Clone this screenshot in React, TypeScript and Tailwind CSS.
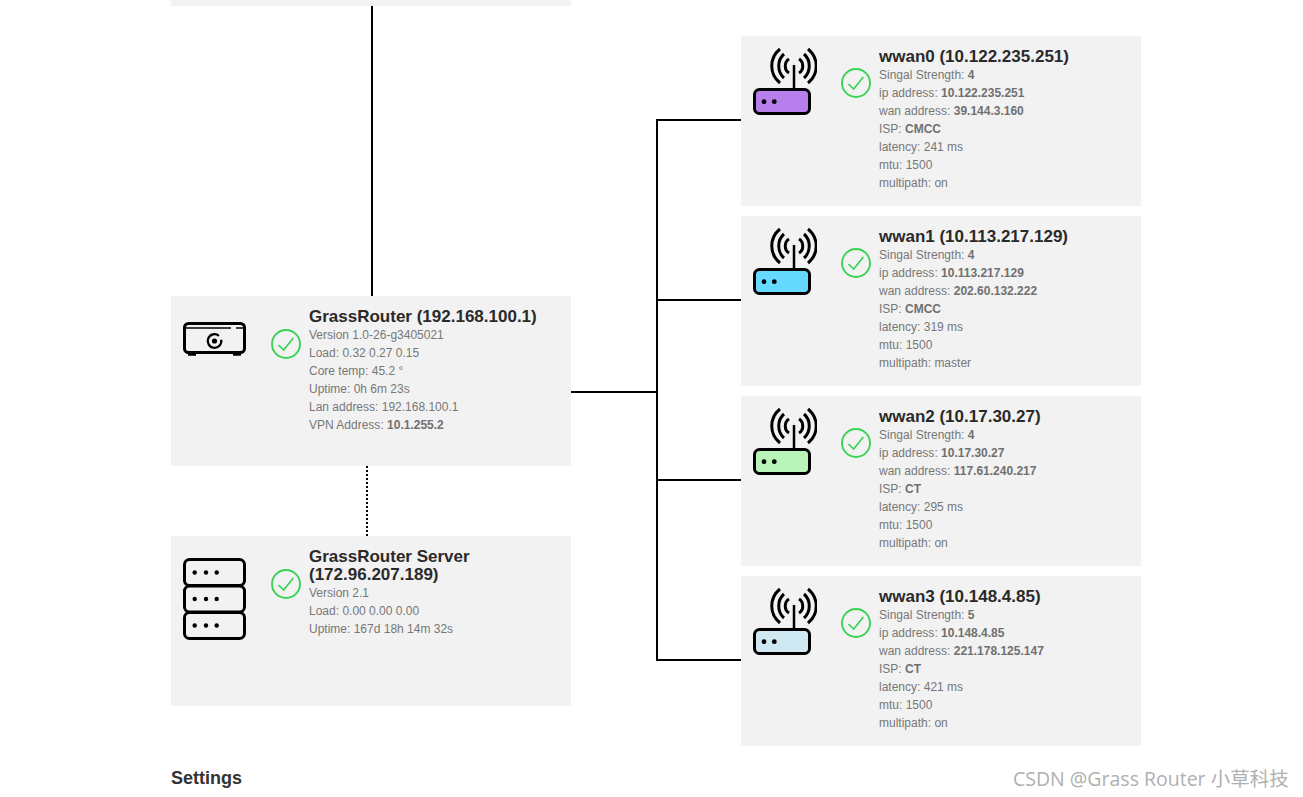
const font = "font-['Liberation_Sans',Arial,sans-serif]";

const wans = [
  {
    name: "wwan0 (10.122.235.251)",
    color: "#b77fec",
    strength: "4",
    ip: "10.122.235.251",
    wan: "39.144.3.160",
    isp: "CMCC",
    latency: "241 ms",
    multipath: "on",
  },
  {
    name: "wwan1 (10.113.217.129)",
    color: "#66d9ff",
    strength: "4",
    ip: "10.113.217.129",
    wan: "202.60.132.222",
    isp: "CMCC",
    latency: "319 ms",
    multipath: "master",
  },
  {
    name: "wwan2 (10.17.30.27)",
    color: "#b8f4b8",
    strength: "4",
    ip: "10.17.30.27",
    wan: "117.61.240.217",
    isp: "CT",
    latency: "295 ms",
    multipath: "on",
  },
  {
    name: "wwan3 (10.148.4.85)",
    color: "#cfe8f1",
    strength: "5",
    ip: "10.148.4.85",
    wan: "221.178.125.147",
    isp: "CT",
    latency: "421 ms",
    multipath: "on",
  },
];

const CheckIcon = ({ top }: { top: string }) => (
  <svg viewBox="0 0 30 30" className={`w-[30px] h-[30px] shrink-0 ml-6 ${top}`} fill="none" stroke="#3ad356">
    <circle cx="15" cy="15" r="14" strokeWidth="1.9" />
    <path d="M7.4 16 L12.7 21 L22.3 9" strokeWidth="1.7" />
  </svg>
);

const RouterIcon = ({ color }: { color: string }) => (
  <svg viewBox="0 0 64 74" className="w-16 h-[74px] shrink-0 mt-2" fill="none" stroke="#000">
    <path d="M27 5 C16 14 16 30 27 39 M31 10 C24 16 24 28 31 34 M36 15 C31 18 31 26 36 29" strokeWidth="3" />
    <path d="M55 5 C66 14 66 30 55 39 M51 10 C58 16 58 28 51 34 M46 15 C51 18 51 26 46 29" strokeWidth="3" />
    <path d="M41 21 V45" strokeWidth="2.5" />
    <rect x="1.5" y="45.5" width="55" height="24" rx="5" fill={color} strokeWidth="3" />
    <circle cx="11" cy="57.7" r="2.4" fill="#000" stroke="none" />
    <circle cx="21.3" cy="57.7" r="2.4" fill="#000" stroke="none" />
  </svg>
);

const MiniPcIcon = () => (
  <svg viewBox="0 0 64 36" className="w-16 h-9 shrink-0 mt-[26px]" fill="none" stroke="#000">
    <rect x="1.5" y="1.5" width="60" height="29" rx="4" strokeWidth="3" />
    <path d="M2 6 H48 M53 6 H61" strokeWidth="1.7" />
    <path d="M5 32 H13 M50 32 H58" strokeWidth="3.4" />
    <path d="M35.9 13.8 A6.8 6.8 0 1 0 38.2 17.8" strokeWidth="2.2" />
    <circle cx="31.5" cy="19" r="2.6" fill="#000" stroke="none" />
  </svg>
);

const ServerIcon = () => (
  <svg viewBox="0 0 64 82" className="w-16 h-[82px] shrink-0 mt-[22px]" fill="none" stroke="#000" strokeWidth="3">
    {[1.5, 28, 54.5].map((y) => (
      <g key={y}>
        <rect x="1.5" y={y} width="60" height="26" rx="5" />
        <circle cx="11.7" cy={y + 13} r="2.2" fill="#000" stroke="none" />
        <circle cx="23" cy={y + 13} r="2.2" fill="#000" stroke="none" />
        <circle cx="33.7" cy={y + 13} r="2.2" fill="#000" stroke="none" />
      </g>
    ))}
  </svg>
);

const Card = ({
  icon,
  checkTop,
  title,
  children,
}: {
  icon: React.ReactNode;
  checkTop: string;
  title: string;
  children: React.ReactNode;
}) => (
  <div className="flex h-[170px] w-[400px] bg-[#f2f2f2] pl-3">
    {icon}
    <CheckIcon top={checkTop} />
    <div className="ml-2 pt-3 pr-6 min-w-0 flex-1">
      <h3 className="text-[17px] leading-[18px] font-bold text-[#2a2a2a]">{title}</h3>
      <div className="text-[12px] leading-[18px] text-[#777]">{children}</div>
    </div>
  </div>
);

const Row = ({ label, value, bold }: { label: string; value: string; bold?: boolean }) => (
  <p>
    {label}: {bold ? <b className="text-[#707070]">{value}</b> : value}
  </p>
);

export default function App() {
  return (
    <div className={`relative h-[797px] w-full overflow-hidden bg-white ${font}`}>
      <div className="flex pl-[171px]">
        <div className="w-[400px]">
          <div className="h-[6px] bg-[#f2f2f2]" />
          <div className="h-[290px] w-[2px] ml-[200px] bg-black" />
          <Card icon={<MiniPcIcon />} checkTop="mt-[33px]" title="GrassRouter (192.168.100.1)">
            <p>Version 1.0-26-g3405021</p>
            <Row label="Load" value="0.32 0.27 0.15" />
            <Row label="Core temp" value="45.2 °" />
            <Row label="Uptime" value="0h 6m 23s" />
            <Row label="Lan address" value="192.168.100.1" />
            <Row label="VPN Address" value="10.1.255.2" bold />
          </Card>
          <div className="h-[70px] ml-[195px] border-l-2 border-dotted border-black" />
          <Card icon={<ServerIcon />} checkTop="mt-[33px]" title="GrassRouter Server (172.96.207.189)">
            <p>Version 2.1</p>
            <Row label="Load" value="0.00 0.00 0.00" />
            <Row label="Uptime" value="167d 18h 14m 32s" />
          </Card>
        </div>

        <svg viewBox="0 0 170 746" className="w-[170px] h-[746px] shrink-0" fill="none" stroke="#000" strokeWidth="2">
          <path d="M0 392 H86" />
          <path d="M86 119 V661" />
          <path d="M86 120 H170 M86 300 H170 M86 480 H170 M86 660 H170" />
        </svg>

        <div className="w-[400px] flex flex-col gap-[10px] pt-9">
          {wans.map((w) => (
            <Card key={w.name} icon={<RouterIcon color={w.color} />} checkTop="mt-8" title={w.name}>
              <Row label="Singal Strength" value={w.strength} bold />
              <Row label="ip address" value={w.ip} bold />
              <Row label="wan address" value={w.wan} bold />
              <Row label="ISP" value={w.isp} bold />
              <Row label="latency" value={w.latency} />
              <Row label="mtu" value="1500" />
              <Row label="multipath" value={w.multipath} />
            </Card>
          ))}
        </div>
      </div>

      <h2 className="pl-[171px] mt-[22px] text-[18px] leading-5 font-bold text-[#333]">Settings</h2>

      <span className="absolute left-[1013px] top-[767px] text-[19.5px] leading-6 text-[#b0b0b0] font-['Open_Sans','Noto_Sans_CJK_SC',sans-serif]">
        CSDN @Grass Router 小草科技
      </span>
    </div>
  );
}
